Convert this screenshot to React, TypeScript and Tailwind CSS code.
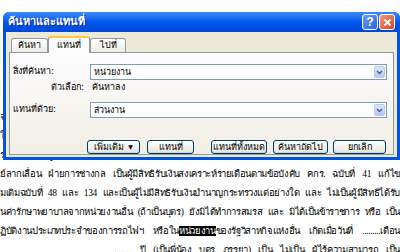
import React from "react";

const docLines = [
  "จนพ้นกำหนด",
  "ในกรณีผู้ป่วยเป็น",
  "รอบครัวของผู้ใช้สิทธิ",
  "ย์ลากเลื่อน ฝ่ายการช่างกล เป็นผู้มีสิทธิรับเงินสงเคราะห์รายเดือนตามข้อบังคับ คกร. ฉบับที่ 41 แก้ไข",
  "มเติมฉบับที่ 48 และ 134 และเป็นผู้ไม่มีสิทธิรับเงินบำนาญกระทรวงแต่อย่างใด และ ไม่เป็นผู้มีสิทธิได้รับ",
  "นค่ารักษาพยาบาลจากหน่วยงานอื่น (ถ้าเป็นบุตร) ยังมิได้ทำการสมรส และ มิได้เป็นข้าราชการ หรือ เป็น",
];

const lineCls =
  "h-[19px] leading-[19px] whitespace-nowrap overflow-hidden text-[9.5px] tracking-[-0.35px] text-black [text-align-last:justify] text-justify";

function DocLine({ text }: { text: string }) {
  return <div className={lineCls}>{text}</div>;
}

function XpButton({ children, w }: { children: React.ReactNode; w: string }) {
  return (
    <div
      className={`${w} h-[14px] flex items-center justify-center whitespace-nowrap rounded-[3px] border border-[#003c74] bg-gradient-to-b from-white to-[#e6e4dc] text-[9px] leading-none text-black shadow-[inset_0_-1px_0_#d6d0c5]`}
    >
      {children}
    </div>
  );
}

function Combo({ value }: { value: string }) {
  return (
    <div className="flex-1 h-[16px] flex items-center border border-[#7f9db9] bg-white pl-[3px] pr-[1px]">
      <span className="flex-1 text-[9px] leading-none text-black">{value}</span>
      <div className="w-[11px] h-[12px] flex items-center justify-center rounded-[2px] border border-[#b9cbf3] bg-gradient-to-b from-[#dce6fc] to-[#b4c8f6]">
        <svg width="7" height="5" viewBox="0 0 7 5">
          <path d="M1 1 L3.5 3.5 L6 1" fill="none" stroke="#4d6185" strokeWidth="1.4" />
        </svg>
      </div>
    </div>
  );
}

function FindReplaceDialog() {
  return (
    <div className="absolute left-[3px] top-[12px] w-[397px] h-[148px] flex flex-col rounded-t-[6px] bg-[#0054e3] px-[3px] pb-[3px] font-['Tahoma','DejaVu_Sans',sans-serif]">
      {/* title bar */}
      <div className="h-[21px] flex items-center -mx-[3px] px-[5px] rounded-t-[6px] bg-gradient-to-b from-[#3d8af7] via-[#0058ee] to-[#0048d6]">
        <span className="flex-1 text-[11px] font-bold text-white [text-shadow:1px_1px_0_#0a1e8c]">
          ค้นหาและแทนที่
        </span>
        <div className="flex gap-[1px]">
          <div className="w-[16px] h-[16px] flex items-center justify-center rounded-[3px] border border-white bg-gradient-to-br from-[#6b9bf7] to-[#2a63e3] text-[12px] font-bold leading-none text-white font-['Liberation_Sans',sans-serif]">
            ?
          </div>
          <div className="w-[16px] h-[16px] flex items-center justify-center rounded-[3px] border border-white bg-gradient-to-br from-[#f09a7c] to-[#d0441c]">
            <svg width="9" height="9" viewBox="0 0 9 9">
              <path d="M1.5 1.5 L7.5 7.5 M7.5 1.5 L1.5 7.5" stroke="white" strokeWidth="1.8" />
            </svg>
          </div>
        </div>
      </div>

      {/* body */}
      <div className="flex-1 flex flex-col bg-[#ece9d8] pt-[3px] px-[3px] pb-[2px]">
        {/* tabs */}
        <div className="flex items-end h-[17px] pl-[2px]">
          <div className="w-[37px] h-[14px] flex items-center justify-center border border-b-0 border-[#919b9c] rounded-t-[3px] bg-gradient-to-b from-white to-[#ecebe5] text-[9px] text-black">
            ค้นหา
          </div>
          <div className="w-[42px] h-[17px] -mb-[1px] relative z-10 flex items-center justify-center border border-b-0 border-[#919b9c] border-t-[2px] border-t-[#ffc83c] rounded-t-[3px] bg-[#fcfcfe] text-[9px] text-black">
            แทนที่
          </div>
          <div className="w-[36px] h-[14px] flex items-center justify-center border border-b-0 border-[#919b9c] rounded-t-[3px] bg-gradient-to-b from-white to-[#ecebe5] text-[9px] text-black">
            ไปที่
          </div>
        </div>

        {/* panel */}
        <div className="flex-1 flex flex-col border border-[#919b9c] bg-gradient-to-b from-[#fcfcfe] to-[#f1efe4] pl-[3px] pr-[6px] pt-[11px]">
          <div className="flex items-center">
            <span className="w-[77px] text-[9px] text-black">สิ่งที่ค้นหา:</span>
            <Combo value="หน่วยงาน" />
          </div>
          <div className="flex items-center mt-[1px] h-[14px] text-[9px] text-black">
            <span className="w-[77px] text-right pr-[6px]">ตัวเลือก:</span>
            <span className="pl-[2px]">ค้นหาลง</span>
          </div>
          <div className="flex items-center mt-[7px]">
            <span className="w-[77px] text-[9px] text-black">แทนที่ด้วย:</span>
            <Combo value="ส่วนงาน" />
          </div>
          <div className="flex items-center mt-[22px] pl-[74px]">
            <XpButton w="w-[53px]">
              เพิ่มเติม <span className="ml-[4px] text-[6px]">▼</span>
            </XpButton>
            <div className="ml-[7px]">
              <XpButton w="w-[47px]">แทนที่</XpButton>
            </div>
            <div className="ml-[17px]">
              <XpButton w="w-[56px]">แทนที่ทั้งหมด</XpButton>
            </div>
            <div className="ml-[6px]">
              <XpButton w="w-[55px]">ค้นหาถัดไป</XpButton>
            </div>
            <div className="ml-[5px]">
              <XpButton w="w-[53px]">ยกเลิก</XpButton>
            </div>
          </div>
        </div>
      </div>
    </div>
  );
}

export default function App() {
  return (
    <div className="relative w-[400px] h-[252px] overflow-hidden bg-white font-['Liberation_Serif','DejaVu_Serif',serif]">
      <div className="pt-[108px]">
        {docLines.map((l, i) => (
          <DocLine key={i} text={l} />
        ))}
        <div className={lineCls}>
          ฏิบัติงานประเภทประจำของการรถไฟฯ หรือใน<span className="bg-black text-white">หน่วยงาน</span>ของรัฐวิสาหกิจแห่งอื่น เกิดเมื่อวันที่ .........เดือน
        </div>
        <div className={`${lineCls} pl-[112px]`}>
          .......... ปี (เป็นพี่น้อง บุตร ภรรยา) เป็น ไม่เป็น ผู้ไร้ความสามารถ เป็น
        </div>
      </div>
      <FindReplaceDialog />
    </div>
  );
}
